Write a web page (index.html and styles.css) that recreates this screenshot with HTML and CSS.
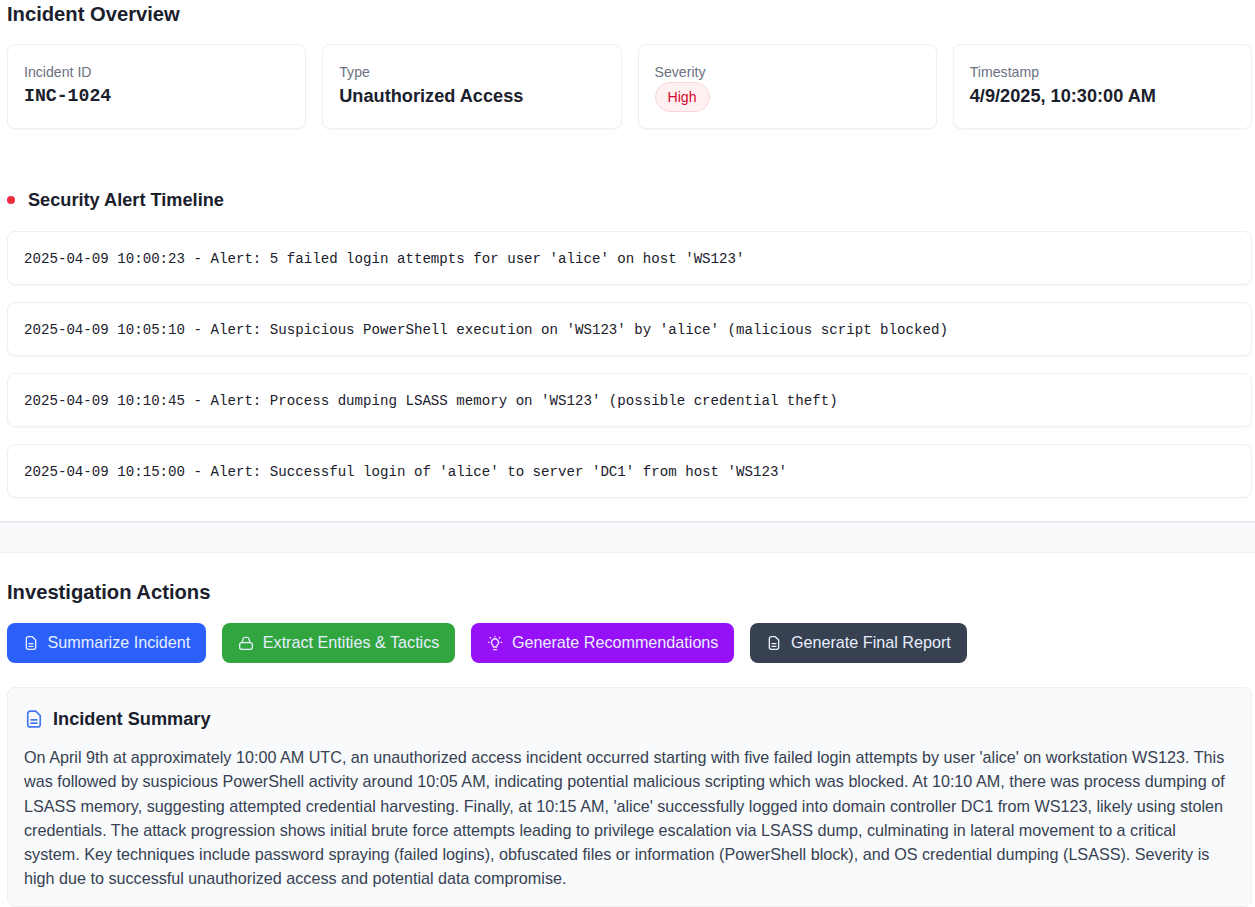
FILE: index.html
```html
<!DOCTYPE html>
<html lang="en">
<head>
<meta charset="utf-8">
<title>Incident Overview</title>
<link rel="stylesheet" href="styles.css">
</head>
<body>
<section class="top">
  <h2 class="title">Incident Overview</h2>
  <div class="cards">
    <div class="card"><div class="label">Incident ID</div><div class="value mono">INC-1024</div></div>
    <div class="card"><div class="label">Type</div><div class="value">Unauthorized Access</div></div>
    <div class="card"><div class="label">Severity</div><span class="badge">High</span></div>
    <div class="card"><div class="label">Timestamp</div><div class="value">4/9/2025, 10:30:00 AM</div></div>
  </div>
  <h3 class="timeline-title"><span class="dot"></span>Security Alert Timeline</h3>
  <div class="alerts">
    <div class="alert">2025-04-09 10:00:23 - Alert: 5 failed login attempts for user 'alice' on host 'WS123'</div>
    <div class="alert">2025-04-09 10:05:10 - Alert: Suspicious PowerShell execution on 'WS123' by 'alice' (malicious script blocked)</div>
    <div class="alert">2025-04-09 10:10:45 - Alert: Process dumping LSASS memory on 'WS123' (possible credential theft)</div>
    <div class="alert">2025-04-09 10:15:00 - Alert: Successful login of 'alice' to server 'DC1' from host 'WS123'</div>
  </div>
</section>
<div class="band"></div>
<section class="actions">
  <h2 class="title">Investigation Actions</h2>
  <div class="buttons">
    <button class="btn blue"><svg class="ic" viewBox="0 0 24 24"><path d="M14 2.500H8a3 3 0 0 0-3 3v13a3 3 0 0 0 3 3h8a3 3 0 0 0 3-3V7.500z"/><path d="M9 13h6M9 17h6"/></svg>Summarize Incident</button>
    <button class="btn green"><svg class="ic" viewBox="0 0 24 24"><rect x="2.500" y="11.500" width="19" height="10" rx="3"/><path d="M6 11.500l1.300-5a3.500 3.500 0 0 1 3.400-3h2.600a3.500 3.500 0 0 1 3.400 3l1.300 5"/></svg>Extract Entities &amp; Tactics</button>
    <button class="btn purple"><svg class="ic" viewBox="0 0 24 24"><path d="M10 22h4"/><path d="M9.500 18c0-2-.7-2.600-1.400-3.400a5.200 5.200 0 1 1 7.800 0c-.7.800-1.400 1.400-1.400 3.400z"/><path d="M12 2v.5M3 11H2M22 11h-1M5.500 4.500l-.7-.7M18.500 4.500l.7-.7"/></svg>Generate Recommendations</button>
    <button class="btn slate"><svg class="ic" viewBox="0 0 24 24"><path d="M14 2.500H8a3 3 0 0 0-3 3v13a3 3 0 0 0 3 3h8a3 3 0 0 0 3-3V7.500z"/><path d="M9 13h6M9 17h6"/></svg>Generate Final Report</button>
  </div>
  <div class="summary">
    <h3 class="summary-title"><svg class="ic-lg" viewBox="0 0 24 24"><path d="M14 2.500H7.500a3 3 0 0 0-3 3v13a3 3 0 0 0 3 3h9a3 3 0 0 0 3-3V8z"/><path d="M8.500 13h7M8.500 17h7"/></svg>Incident Summary</h3>
    <p class="summary-text">On April 9th at approximately 10:00 AM UTC, an unauthorized access incident occurred starting with five failed login attempts by user 'alice' on workstation WS123. This was followed by suspicious PowerShell activity around 10:05 AM, indicating potential malicious scripting which was blocked. At 10:10 AM, there was process dumping of LSASS memory, suggesting attempted credential harvesting. Finally, at 10:15 AM, 'alice' successfully logged into domain controller DC1 from WS123, likely using stolen credentials. The attack progression shows initial brute force attempts leading to privilege escalation via LSASS dump, culminating in lateral movement to a critical system. Key techniques include password spraying (failed logins), obfuscated files or information (PowerShell block), and OS credential dumping (LSASS). Severity is high due to successful unauthorized access and potential data compromise.</p>
  </div>
</section>
</body>
</html>
```
FILE: styles.css
```css
* { box-sizing: border-box; }
html, body { margin: 0; padding: 0; background: #fff; }
body { font-family: "Liberation Sans", Arial, sans-serif; color: #1a202c; height: 907px; overflow: hidden; }
.top { padding: 0 3px 23px 7px; border-bottom: 2px solid #e8eaed; }
.title { margin: 0; font-size: 20.2px; line-height: 28px; font-weight: 700; color: #1a202c; }
.cards { display: grid; grid-template-columns: repeat(4, 1fr); gap: 16px; margin-top: 16px; }
.card { height: 85px; padding: 17px 16px; border: 1px solid #eeeff1; border-radius: 8px; background: #fff; box-shadow: 0 1px 2px rgba(0,0,0,.03); }
.label { font-size: 14.14px; line-height: 20px; color: #6b7280; }
.value { font-size: 18.18px; line-height: 28px; font-weight: 700; color: #1a202c; }
.mono { font-family: "Liberation Mono", monospace; }
.badge { display: inline-block; height: 30px; padding: 0 12px; border: 1px solid #fbd5dc; border-radius: 15px; background: #fff0f2; color: #d6062f; font-size: 14.14px; line-height: 28px; }
.timeline-title { display: flex; align-items: center; margin: 57px 0 0; font-size: 18.18px; line-height: 28px; font-weight: 700; }
.dot { width: 8px; height: 8px; border-radius: 50%; background: #ef2b3c; margin-right: 13px; }
.alerts { display: flex; flex-direction: column; gap: 17px; margin-top: 17px; }
.alert { height: 54px; padding: 0 16px; border: 1px solid #eeeff1; border-radius: 8px; font-family: "Liberation Mono", monospace; font-size: 14.14px; line-height: 54px; color: #1a202c; white-space: nowrap; box-shadow: 0 1px 2px rgba(0,0,0,.03); }
.band { height: 30px; background: #f9fafb; border-bottom: 1px solid #f1f2f4; }
.actions { padding: 25px 3px 0 7px; }
.buttons { display: flex; gap: 16px; margin-top: 17px; }
.btn { display: flex; align-items: center; gap: 8.75px; height: 40px; padding: 0 16px 2px 15.75px; border: 0; border-radius: 8px; color: #e8eeff; font-family: inherit; font-size: 16.16px; }
.blue { background: #2b60fb; }
.green { background: #31a63f; }
.purple { background: #9610f8; }
.slate { background: #374151; }
.ic { width: 16px; height: 16px; margin-top: 2px; fill: none; stroke: currentColor; stroke-width: 2; stroke-linecap: round; stroke-linejoin: round; }
.summary { margin-top: 24px; height: 220px; padding: 17px 16px; border: 1px solid #eeeff1; border-radius: 8px; background: #f8fafc; }
.summary-title { display: flex; align-items: center; gap: 9px; margin: 0; font-size: 18.18px; line-height: 28px; font-weight: 700; }
.ic-lg { width: 20px; height: 20px; fill: none; stroke: #4577ee; stroke-width: 2; stroke-linecap: round; stroke-linejoin: round; }
.summary-text { margin: 12px 0 0; font-size: 16.16px; line-height: 24.3px; color: #374151; }
```
